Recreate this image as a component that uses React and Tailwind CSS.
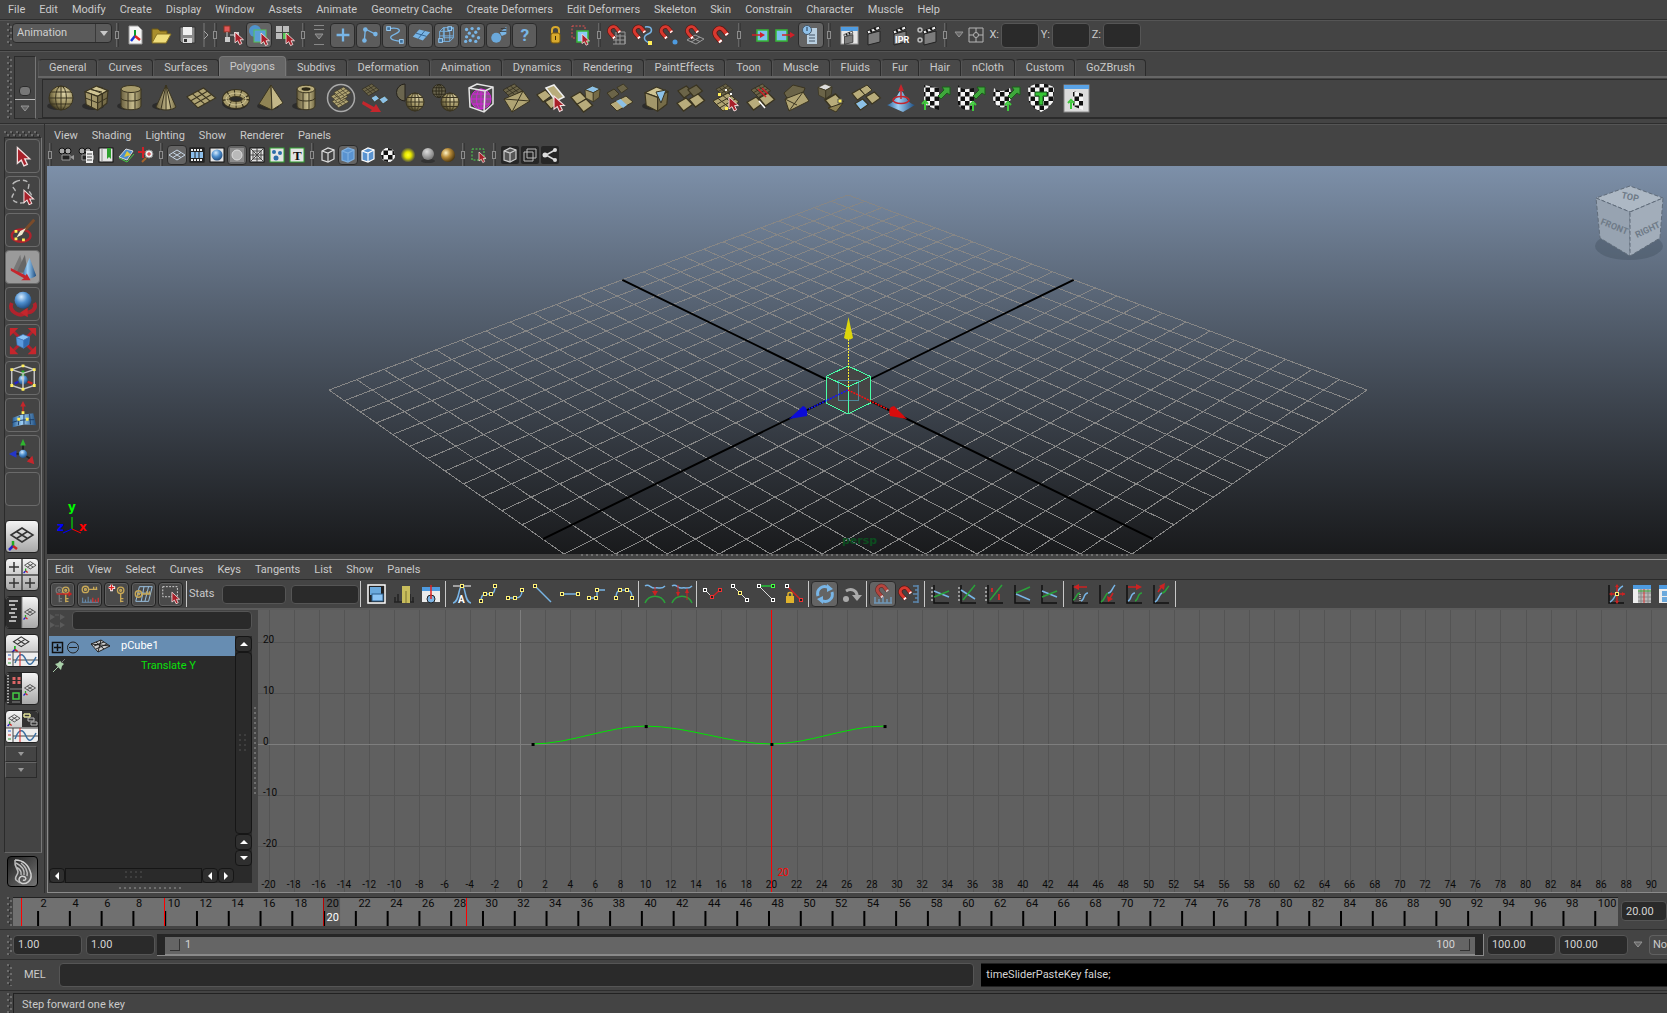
import { useState } from "react";

const MENUS = [
  "File", "Edit", "Modify", "Create", "Display", "Window", "Assets", "Animate",
  "Geometry Cache", "Create Deformers", "Edit Deformers", "Skeleton", "Skin",
  "Constrain", "Character", "Muscle", "Help",
];
const SHELF_TABS = [
  "General", "Curves", "Surfaces", "Polygons", "Subdivs", "Deformation",
  "Animation", "Dynamics", "Rendering", "PaintEffects", "Toon", "Muscle",
  "Fluids", "Fur", "Hair", "nCloth", "Custom", "GoZBrush",
];
const PANEL_MENUS = ["View", "Shading", "Lighting", "Show", "Renderer", "Panels"];
const GRAPH_MENUS = ["Edit", "View", "Select", "Curves", "Keys", "Tangents", "List", "Show", "Panels"];

/* ---------- shared svg pieces ---------- */

const Defs = () => (
  <svg className="absolute h-0 w-0" aria-hidden="true">
    <defs>
      <radialGradient id="tan" cx="0.65" cy="0.3" r="0.8">
        <stop offset="0" stopColor="#e0d6aa" />
        <stop offset="0.55" stopColor="#9c9060" />
        <stop offset="1" stopColor="#2f2a16" />
      </radialGradient>
      <linearGradient id="tanv" x1="0" y1="0" x2="1" y2="0">
        <stop offset="0" stopColor="#6b6140" />
        <stop offset="0.6" stopColor="#c6bb8c" />
        <stop offset="1" stopColor="#756b45" />
      </linearGradient>
      <radialGradient id="blue" cx="0.4" cy="0.3" r="0.8">
        <stop offset="0" stopColor="#d6ecff" />
        <stop offset="0.45" stopColor="#4e8fce" />
        <stop offset="1" stopColor="#143a6a" />
      </radialGradient>
      <linearGradient id="bluev" x1="0" y1="0" x2="1" y2="0">
        <stop offset="0" stopColor="#2b6299" />
        <stop offset="0.4" stopColor="#9fd0f5" />
        <stop offset="1" stopColor="#1c4c80" />
      </linearGradient>
      <radialGradient id="grey" cx="0.4" cy="0.3" r="0.8">
        <stop offset="0" stopColor="#dddddd" />
        <stop offset="1" stopColor="#6b6b6b" />
      </radialGradient>
      <radialGradient id="gold" cx="0.35" cy="0.35" r="0.8">
        <stop offset="0" stopColor="#fff3c4" />
        <stop offset="0.4" stopColor="#b98d3a" />
        <stop offset="1" stopColor="#2c1d04" />
      </radialGradient>
      <radialGradient id="glow">
        <stop offset="0" stopColor="#ffff30" />
        <stop offset="0.4" stopColor="#e6e600" />
        <stop offset="1" stopColor="#e6e600" stopOpacity="0" />
      </radialGradient>
      <pattern id="dots" width="6" height="6" patternUnits="userSpaceOnUse">
        <rect width="2" height="2" fill="#6c6c6c" />
        <rect x="3" y="3" width="2" height="2" fill="#6c6c6c" />
        <rect x="2" y="1" width="1" height="2" fill="#2c2c2c" />
        <rect x="5" y="4" width="1" height="2" fill="#2c2c2c" />
      </pattern>
      <pattern id="row" width="5" height="5" patternUnits="userSpaceOnUse">
        <rect width="2" height="2" fill="#6e6e6e" />
      </pattern>
      <pattern id="check" width="9" height="9" patternUnits="userSpaceOnUse">
        <rect width="9" height="9" fill="#f4f4f4" />
        <rect width="4.500" height="4.500" fill="#111" />
        <rect x="4.500" y="4.500" width="4.500" height="4.500" fill="#111" />
      </pattern>
    </defs>
  </svg>
);

const Svg = ({ s = 24, px = s, children }) => (
  <svg width={px} height={px} viewBox={`0 0 ${s} ${s}`} className="shrink-0 overflow-visible" fill="none" aria-hidden="true">
    {children}
  </svg>
);

const Grip = ({ className }) => (
  <svg className={`shrink-0 ${className}`} aria-hidden="true">
    <rect width="100%" height="100%" fill="url(#dots)" />
  </svg>
);

const Cursor = ({ x, y, k = 1 }) => (
  <path
    transform={`translate(${x} ${y}) scale(${k})`}
    d="M0 0V12L3 9.6L5 14L7.6 12.8L5.6 8.6H9.4Z"
    fill="#a8202a"
    stroke="#f3dede"
    strokeWidth="1"
  />
);

const Mesh = ({ x, y, k = 1, dim }) => (
  <g transform={`translate(${x} ${y}) scale(${k})`} stroke={dim ? "#2e2a1b" : "#3a3420"} strokeWidth="1">
    <path d="M0 8L15 0L26 9L10 18Z" fill={dim ? "#6b6448" : "#b0a473"} />
    <path d="M5 5.3L16 14.5M10 2.7L21 12M3.5 11.5L18.5 3M6.8 14.8L22.3 6" />
  </g>
);

const Quad = ({ x, y, dim, k = 1, fill }) => (
  <path
    transform={`translate(${x} ${y}) scale(${k})`}
    d="M0 4L7 0L12 5L5 10Z"
    fill={fill || (dim ? "#6b6448" : "#b8ac7b")}
    stroke="#3a3420"
  />
);

const Ball = ({ cx, cy, r, fill = "url(#tan)", line = "#3a3420" }) => (
  <g stroke={line}>
    <circle cx={cx} cy={cy} r={r} fill={fill} />
    <ellipse cx={cx} cy={cy} rx={r * 0.45} ry={r} />
    <path d={`M${cx - r} ${cy}H${cx + r}M${cx - r * 0.85} ${cy - r * 0.5}H${cx + r * 0.85}M${cx - r * 0.85} ${cy + r * 0.5}H${cx + r * 0.85}M${cx} ${cy - r}V${cy + r}`} />
  </g>
);

const Box = ({ x, y, k = 1, a = "#cfc493", b = "#a3976a", c = "#766c48", line = "#3a3420" }) => (
  <g transform={`translate(${x} ${y}) scale(${k})`} stroke={line} strokeLinejoin="round">
    <path d="M0 5L10 0L20 4L11 9Z" fill={a} />
    <path d="M0 5L11 9V21L1 16Z" fill={b} />
    <path d="M11 9L20 4L19 15L11 21Z" fill={c} />
  </g>
);

const Shadow = () => <ellipse cx="12" cy="23" rx="11" ry="4" fill="#2b2b2b" />;

const GreenArrow = ({ x, y }) => (
  <path transform={`translate(${x} ${y})`} d="M0 10L6 4L4 1H12V9L9 7L3 13Z" fill="#3fa83c" stroke="#1d5c1c" />
);
const GreenT = ({ x, y }) => (
  <path transform={`translate(${x} ${y})`} d="M4 9V2M1 3L4 0L7 3" stroke="#3fc83c" strokeWidth="2" />
);

/* ---------- shelf icons, 30 x 30 ---------- */

const SHELF = [
  ["Sphere", <><Shadow /><Ball cx={15} cy={15} r={12} /></>],
  ["Cube", <><Shadow /><Box x={4} y={3} k={1.15} /><path d="M4.5 15L17 20L26 15M10 6L21 10.500V24M16 3.500L22 5M10.500 11V25M9.500 6.500L21 9M21.500 10V24" stroke="#3a3420" /></>],
  ["Cylinder", <><Shadow /><path d="M5 6V23C5 28 25 28 25 23V6Z" fill="url(#tanv)" stroke="#3a3420" /><ellipse cx="15" cy="6" rx="10" ry="3.500" fill="#a89c6c" stroke="#3a3420" /><path d="M5 15C5 19 25 19 25 15M12 10V26M19 10V26" stroke="#3a3420" /></>],
  ["Cone", <><Shadow /><path d="M15 2L5 24C9 28 21 28 25 24Z" fill="url(#tanv)" stroke="#3a3420" /><path d="M15 2L10 26M15 2L15 27M15 2L20 26" stroke="#3a3420" /></>],
  ["Plane", <Mesh x={1} y={5} k={1.1} />],
  ["Torus", <><ellipse cx="14" cy="20" rx="13" ry="7" fill="#2b2b2b" /><ellipse cx="15" cy="16" rx="10" ry="6" stroke="#3a3420" strokeWidth="8" /><ellipse cx="15" cy="16" rx="10" ry="6" stroke="#a89c6c" strokeWidth="6" /><ellipse cx="15" cy="16" rx="10" ry="6" stroke="#3a3420" strokeWidth="7" strokeDasharray="1 5" /><ellipse cx="15" cy="16" rx="10" ry="6" stroke="#cfc493" strokeWidth="1" /></>],
  ["Pyramid", <><Shadow /><path d="M15 2L3 21L16 27Z" fill="#8f8354" stroke="#3a3420" /><path d="M15 2L16 27L27 20Z" fill="#c3b788" stroke="#3a3420" /></>],
  ["Pipe", <><Shadow /><path d="M6 6V23C6 28 24 28 24 23V6Z" fill="url(#tanv)" stroke="#3a3420" /><ellipse cx="15" cy="6" rx="9" ry="3.800" fill="#b8ac7b" stroke="#3a3420" /><ellipse cx="15" cy="6" rx="4.500" ry="1.800" fill="#2b2717" /><path d="M6 15C6 19 24 19 24 15M12 10V26M18 10V26" stroke="#3a3420" /></>],
  ["Combine", <><circle cx="15" cy="15" r="13.500" stroke="#a9a9a9" strokeWidth="1.500" /><Mesh x={6} y={13} k={0.65} /><Mesh x={5} y={8} k={0.65} /><Mesh x={8} y={4} k={0.65} /></>],
  ["Separate", <><Mesh x={1} y={1} k={0.65} dim /><Quad x={10} y={12} k={0.7} fill="#8dc1e6" /><Quad x={18} y={13} k={0.8} fill="#8dc1e6" /><path d="M2 18L13 24L15 21L20 29L9 29L11 27L1 21Z" fill="#c5262c" /></>],
  ["Extract", <><path d="M9 1A8 8 0 0 0 9 18Z" fill="#6b664f" stroke="#24211a" /><Ball cx={19} cy={19} r={9} /></>],
  ["Booleans", <><Ball cx={8} cy={8} r={6.5} fill="#6b664f" line="#2e2a1b" /><Ball cx={19} cy={19} r={9} /></>],
  ["Smooth Proxy", <><Ball cx={15} cy={16} r={10} fill="#8a4f8c" line="#d323d8" /><path d="M3 5L11 1L27 4V21L18 29L4 24ZM3 5L19 8L27 4M19 8L18 29" stroke="#e4e4e4" strokeWidth="1.500" /></>],
  ["Reduce", <><Mesh x={2} y={1} k={0.75} dim /><path d="M3 16L22 8L29 18L11 29Z" fill="#b0a473" stroke="#3a3420" /><path d="M3 16L29 18M22 8L11 29" stroke="#3a3420" /></>],
  ["Split Polygon", <><Quad x={1} y={7} k={1.2} /><Quad x={9} y={14} k={1.2} /><path d="M10 5L18 2L28 14L20 18Z" fill="#b8ac7b" stroke="#eee" strokeWidth="1.500" /><Cursor x={18} y={13} k={1.1} /></>],
  ["Extrude", <><Quad x={0} y={9} k={1.3} /><Quad x={6} y={16} k={1.3} /><Box x={14} y={3} k={0.75} a="#8dc1e6" /></>],
  ["Bridge", <><Quad x={1} y={6} dim /><Quad x={11} y={1} dim k={0.9} /><path d="M4 21L20 13L27 19L11 28Z" fill="#b8ac7b" stroke="#3a3420" /><path d="M10 18L14.500 16L21 22L17 25Z" fill="#8dc1e6" /></>],
  ["Bevel", <><Shadow /><Box x={4} y={4} k={1.15} /><path d="M15 9L25 7L20 20Z" fill="#8dc1e6" stroke="#3a3420" /></>],
  ["Merge", <><Quad x={2} y={3} k={1.2} dim /><Quad x={12} y={2} dim k={1.2} /><Quad x={1} y={15} k={1.3} /><Quad x={13} y={11} k={1.3} /></>],
  ["Merge Vertex", <><Mesh x={5} y={1} k={0.65} dim /><Mesh x={2} y={10} /><path d="M7 10H10V13H7ZM14 24H17V27H14Z" fill="#ffee58" /><path d="M14 6H16V8H14ZM19 10H21V12H19Z" fill="#fff" /><Cursor x={18} y={14} /></>],
  ["Cut Faces", <><Mesh x={5} y={1} k={0.75} dim /><Quad x={1} y={14} k={1.3} /><Quad x={13} y={10} k={1.3} /><path d="M12 6L20 14M16 5L22 11" stroke="#d02028" strokeWidth="1.500" /><path d="M13 18L19 25" stroke="#fff" strokeWidth="1.500" /></>],
  ["Triangulate", <><path d="M3 10L12 2L24 5L21 13L6 15Z" fill="#6b6448" stroke="#3a3420" /><path d="M4 16L22 9L28 18L8 28Z" fill="#b0a473" stroke="#3a3420" /><path d="M22 9L8 28M4 16L16 22" stroke="#3a3420" /></>],
  ["Chamfer", <><Box x={2} y={1} k={0.7} a="#ddd" b="#6b6448" c="#5b563f" /><Quad x={9} y={11} k={1.5} /><path d="M12 25L20 29L27 20Z" fill="#8f8354" stroke="#3a3420" /><path d="M22 16H26V20H22Z" fill="#ffee58" stroke="#555" /></>],
  ["Poke", <><Quad x={1} y={6} k={1.1} /><Quad x={15} y={9} k={1.2} /><Quad x={9} y={2} /><Quad x={4} y={16} k={1.1} fill="#8dc1e6" /></>],
  ["Sculpt", <><path d="M1 22C10 20 12 8 15 8S20 20 29 22L17 29Z" fill="url(#bluev)" /><ellipse cx="15" cy="17" rx="8" ry="3.500" stroke="#c5262c" strokeWidth="1.500" /><path d="M15 16V6" stroke="#c5262c" strokeWidth="1.500" /><path d="M12 8L15 1L18 8Z" fill="#c5262c" /></>],
  ["Planar Mapping", <><path d="M3 2L18 5V27L3 22Z" fill="url(#check)" /><GreenArrow x={17} y={3} /><GreenT x={0} y={18} /></>],
  ["Cylindrical Mapping", <><path d="M2 2C6 8 12 6 18 5V25C12 29 4 26 2 21Z" fill="url(#check)" /><GreenArrow x={17} y={3} /><GreenT x={13} y={19} /></>],
  ["Spherical Mapping", <><path d="M3 5C6 9 14 9 19 5C21 12 20 20 16 23C10 27 3 22 2 16Z" fill="url(#check)" /><GreenArrow x={17} y={3} /><GreenT x={13} y={19} /></>],
  ["Automatic Mapping", <><path d="M2 4L10 1H20L28 4L27 19L22 25L15 29L8 25L3 19Z" fill="url(#check)" /><path d="M9 9H21V13H17V22H13V13H9Z" fill="#35c435" stroke="#14501a" /></>],
  ["UV Texture Editor", <><rect x="3" y="2" width="25" height="27" fill="#dcdcdc" stroke="#888" /><rect x="3" y="2" width="25" height="4" fill="#5aa3e6" /><path d="M12 8L22 11V27L12 23Z" fill="url(#check)" /><GreenT x={6} y={17} /></>],
];

/* ---------- status line icons, 24 x 24 ---------- */

const Clap = ({ x = 0 }) => (
  <g transform={`translate(${x} 0)`}>
    <path d="M5 11L17 8V19L5 22Z" fill="#7c7c7c" stroke="#222" />
    <path d="M4 8L16 3L17 6L5 11Z" fill="#eee" stroke="#222" />
    <path d="M7 7L9 9M11 5L13 7" stroke="#111" strokeWidth="2" />
  </g>
);

const Magnet = ({ x = 0, y = 0, k = 1 }) => (
  <g transform={`translate(${x} ${y}) scale(${k})`} strokeWidth="4">
    <path d="M10 19L4 12C0 6 9 0 13 6L17 11" stroke="#5c1410" strokeWidth="5.500" />
    <path d="M10 19L4 12C0 6 9 0 13 6L17 11" stroke="#d8392f" />
    <path d="M8.500 17.200L10 19M15.800 9.400L17 11" stroke="#fff" />
  </g>
);

const Dot = ({ x, y, c = "#9fd4ff" }) => <rect x={x} y={y} width="4" height="4" fill="#3f6f99" stroke={c} />;

const FILES = [
  ["New Scene", <><path d="M6 3H15L19 7V21H6Z" fill="#f5f5f5" stroke="#999" /><path d="M12 13V7" stroke="#0a9b2a" strokeWidth="2" /><path d="M12 13L8 18" stroke="#1535d8" strokeWidth="2.500" /><path d="M12 13L17 17" stroke="#e02020" strokeWidth="2.500" /></>],
  ["Open Scene", <><path d="M3 19V6H9L11 8H18V11" fill="#a98e2c" stroke="#6b5716" /><path d="M3 20L8 11H22L17 20Z" fill="#f0de7c" stroke="#8a7423" /></>],
  ["Save Scene", <><path d="M5 4H20V20H7L5 18Z" fill="#8b8b8b" stroke="#333" /><rect x="8" y="4" width="9" height="8" fill="#f1f1f1" /><rect x="8" y="15" width="9" height="5" fill="#ddd" /><rect x="9" y="16" width="3" height="3" fill="#333" /></>],
];

const SELECT_MODES = [
  ["Select by hierarchy", <><rect x="3" y="3" width="6" height="6" fill="#e05858" stroke="#832" /><rect x="4" y="14" width="5" height="5" fill="#ccc" /><rect x="13" y="9" width="5" height="5" fill="#ccc" /><path d="M6 9V14M9 12H13" stroke="#ccc" /><Cursor x={14} y={9} k={0.9} /></>],
  ["Select by object type", <><circle cx="8" cy="8" r="6" fill="#4f93cb" /><rect x="7" y="7" width="12" height="12" fill="#5b9fd6" stroke="#57c457" strokeWidth="1" /><Cursor x={14} y={10} k={0.9} /></>, true],
  ["Select by component type", <><rect x="3" y="3" width="6" height="6" fill="#bbb" /><rect x="10" y="3" width="6" height="6" fill="#bbb" /><rect x="3" y="10" width="6" height="6" fill="#bbb" /><rect x="10" y="10" width="6" height="6" fill="#57c457" /><Cursor x={13} y={10} k={0.9} /></>],
];

const MASKS = [
  ["Handles", <path d="M12 5V19M5 12H19" stroke="#78b5e6" strokeWidth="2.500" />],
  ["Joints", <><path d="M8 6L7 17M9 6L19 11" stroke="#78b5e6" strokeWidth="1.500" /><circle cx="8" cy="6" r="2.500" fill="#78b5e6" /><circle cx="7" cy="18" r="2.500" fill="#78b5e6" /><circle cx="19" cy="11" r="2.500" fill="#78b5e6" /></>],
  ["Curves", <><path d="M5 5C18 3 20 8 12 11S6 18 19 19" stroke="#78b5e6" strokeWidth="1.500" /><Dot x={3} y={3} /><Dot x={17} y={17} /></>],
  ["Surfaces", <><path d="M3 14L10 6L22 9L14 18Z" fill="#78b5e6" /><path d="M6.500 10L18 13.500M9 16L16 7.500" stroke="#2f5f8c" /></>],
  ["Deformers", <><path d="M4 8H15V19H4ZM8 4H19V15H8ZM4 8L8 4M15 8L19 4M15 19L19 15M9 4V19M4 13H19" stroke="#78b5e6" /><Dot x={13} y={3} /><Dot x={3} y={16} /></>],
  ["Dynamics", <g fill="#78b5e6">{[[5, 6], [11, 5], [18, 5], [8, 10], [15, 9], [5, 14], [12, 13], [18, 15], [9, 18], [15, 19], [4, 19]].map(([x, y]) => <circle key={`${x}-${y}`} cx={x} cy={y} r="1.800" />)}</g>],
  ["Rendering", <><circle cx="9" cy="15" r="5.500" fill="#6ba9dc" /><path d="M13 9L20 3V11L15 13Z" fill="#78b5e6" /><path d="M14 5H20M13 8H20" stroke="#333" /></>],
  ["Miscellaneous", <text x="7" y="19" fontSize="19" fontWeight="700" fill="#78b5e6">?</text>],
];

const LOCKS = [
  ["Lock selection", <><path d="M9 11V7C9 3 16 3 16 7V11" stroke="#d8a92c" strokeWidth="2" /><rect x="8" y="10" width="9" height="10" rx="2" fill="#d8a92c" stroke="#7b5a0c" /><rect x="12" y="13" width="1" height="4" fill="#3b2b05" /></>],
  ["Highlight selection", <><path d="M3 3H16V15H3Z" stroke="#e05050" strokeDasharray="2 1.500" /><rect x="8" y="8" width="11" height="11" fill="#8dc9f5" stroke="#37b837" strokeWidth="1.500" /><Cursor x={13} y={11} k={0.8} /></>],
];

const SNAPS = [
  ["Snap to grids", <><path d="M10 13H20V21H8M11 9V21M15 11V21M20 9V21M8 17H20M13 9H20" stroke="#9a9a9a" /><Magnet x={2} y={1} k={0.75} /></>],
  ["Snap to curves", <><Magnet x={1} y={1} k={0.75} /><path d="M14 4C22 3 22 9 17 11S12 18 19 20" stroke="#78b5e6" strokeWidth="1.500" /><rect x="17" y="18" width="4" height="4" fill="#ffee58" /></>],
  ["Snap to points", <><Magnet x={2} y={1} k={0.75} /><circle cx="18" cy="19" r="2.500" fill="#4e9be0" /></>],
  ["Snap to view planes", <><path d="M4 17L12 12L21 16L13 21ZM8 14.500L17 18.500M8 19L17 14" stroke="#9a9a9a" /><Magnet x={2} y={1} k={0.75} /></>],
  ["Make live", <Magnet x={3} y={2} k={0.9} />],
];

const HISTORY = [
  ["Inputs to selected", <><rect x="10" y="7" width="11" height="11" fill="#7cc0ee" stroke="#37b837" strokeWidth="1.500" /><path d="M5 12H13" stroke="#d02028" strokeWidth="1.500" /><path d="M13 9L18 12L13 15Z" fill="#d02028" /></>],
  ["Outputs of selected", <><rect x="3" y="7" width="11" height="11" fill="#7cc0ee" stroke="#37b837" strokeWidth="1.500" /><path d="M9 12H18" stroke="#d02028" strokeWidth="1.500" /><path d="M17 9L22 12L17 15Z" fill="#d02028" /></>],
  ["Construction history", <><path d="M8 5H18V21H8Z" fill="#b9cfe0" /><circle cx="8" cy="7" r="4.500" fill="#8fc1ea" stroke="#456" /><path d="M8 4V8" stroke="#234" /><path d="M10 12H16M10 15H16M10 18H16" stroke="#456" /></>, true],
];

const RENDERS = [
  ["Render view", <><rect x="4" y="4" width="17" height="17" fill="#e6e6e6" stroke="#999" /><rect x="4" y="4" width="17" height="4" fill="#4e9be0" /><g transform="translate(4 6) scale(0.700)"><Clap /></g></>],
  ["Render current frame", <Clap />],
  ["IPR render", <><Clap /><text x="6" y="20" fontSize="9" fontWeight="700" fill="#fff">IPR</text></>],
  ["Render settings", <><circle cx="5" cy="7" r="2" stroke="#bbb" strokeWidth="1.500" /><circle cx="5" cy="17" r="2" stroke="#bbb" strokeWidth="1.500" /><Clap x={4} /></>],
];

/* ---------- viewport panel icons, 18 x 18 ---------- */

const Cam = () => (
  <>
    <circle cx="5" cy="5" r="3" fill="#aaa" stroke="#111" />
    <circle cx="11" cy="5" r="3" fill="#aaa" stroke="#111" />
    <path d="M5 9H13V14H5Z" fill="#222" stroke="#999" />
    <path d="M13 11L17 9V14Z" fill="#999" />
  </>
);
const WireBox = ({ a = "none", b = "none", line = "#ddd" }) => (
  <g stroke={line} strokeWidth="1.200">
    <path d="M3 5L9 2L15 4V13L9 16L3 14Z" fill={a} />
    <path d="M3 5L9 7L15 4M9 7V16" fill={b} />
  </g>
);
const Card = ({ children, line = "#111" }) => (
  <>
    <rect x="2" y="2" width="14" height="14" fill="#e4e4e4" stroke={line} />
    {children}
  </>
);

const PANEL_ICONS = [
  [
    ["Select camera", <Cam />],
    ["Camera attributes", <><Cam /><path d="M9 5H16V17H9Z" fill="#eee" /><path d="M10 8H15M10 11H15M10 14H15" stroke="#444" /></>],
    ["Bookmarks", <Card><path d="M10 2H14V13L12 11L10 13Z" fill="#2fa02f" /><path d="M5 2V16" stroke="#888" /></Card>],
    ["Image plane", <><path d="M2 11L9 3L16 5L10 14Z" fill="#4c8fd0" stroke="#ddd" /><path d="M7 11L10 5L14 9Z" fill="#e0c93c" /><path d="M2 12L10 16L17 8" stroke="#4c4" /></>],
    ["2D pan zoom", <><path d="M6 1V12M1 6H12" stroke="#d02028" strokeWidth="2" /><circle cx="12" cy="8" r="4" fill="#eee" stroke="#888" /><path d="M12 6V10M10 8H14" stroke="#d02028" /><path d="M9 12L5 16" stroke="#a8642c" strokeWidth="2" /></>],
  ],
  [
    ["Grid", <path d="M1 9L9 4L17 9L9 14ZM5 6.500L13 11.500M5 11.500L13 6.500" stroke="#c6d5e4" />, true],
    ["Film gate", <Card><rect x="2" y="2" width="14" height="14" fill="#222" /><rect x="3" y="6" width="12" height="6" fill="#8dbfec" /><path d="M3 4H15M3 14H15" stroke="#eee" strokeWidth="2" strokeDasharray="2 1" /><path d="M7 6V12M11 6V12" stroke="#222" /></Card>],
    ["Resolution gate", <Card><circle cx="9" cy="9" r="5.500" fill="url(#blue)" /></Card>],
    ["Gate mask", <><rect x="2" y="2" width="14" height="14" fill="#8c8c8c" /><circle cx="9" cy="9" r="5" fill="#b9b9b9" stroke="#ddd" /></>, true],
    ["Field chart", <Card><path d="M2 2L16 16M16 2L2 16M9 2V16M2 9H16M5 5H13V13H5Z" stroke="#444" /></Card>],
    ["Safe action", <Card line="#2fa02f"><circle cx="6" cy="6" r="2" fill="#2c6ca8" /><circle cx="12" cy="7" r="2" fill="#2c6ca8" /><circle cx="8" cy="12" r="2.500" fill="#2c6ca8" /></Card>],
    ["Safe title", <Card line="#2fa02f"><text x="5" y="14" fontSize="13" fontWeight="700" fontFamily="Liberation Serif, serif" fill="#111">T</text></Card>],
  ],
  [
    ["Wireframe", <WireBox />],
    ["Smooth shade", <WireBox a="#5a93d0" line="#7fb0e0" />, true],
    ["Wireframe on shaded", <WireBox a="#5a93d0" line="#fff" />],
    ["Textured", <><circle cx="9" cy="9" r="7" fill="#f2f2f2" /><circle cx="9" cy="9" r="7" fill="url(#check)" /></>],
    ["Use all lights", <circle cx="9" cy="9" r="7.500" fill="url(#glow)" />],
    ["Shadows", <><ellipse cx="9" cy="15" rx="7" ry="2" fill="#333" /><circle cx="9" cy="8" r="6" fill="url(#grey)" /></>],
    ["High quality", <circle cx="9" cy="9" r="7" fill="url(#gold)" />],
  ],
  [["Isolate select", <><path d="M2 3H14V14H2Z" stroke="#4fd84f" strokeDasharray="2 1.500" /><Cursor x={9} y={6} k={0.75} /></>]],
  [
    ["X-ray", <><rect width="18" height="18" rx="2" fill="#262626" /><WireBox a="#555" line="#ccc" /></>],
    ["X-ray components", <><rect width="18" height="18" rx="2" fill="#262626" /><path d="M3 6H12V15H3ZM6 3H15V12H6Z" stroke="#bbb" /></>],
    ["X-ray joints", <><rect width="18" height="18" rx="2" fill="#262626" /><path d="M14 4L5 9L14 14" stroke="#ddd" strokeWidth="1.500" /><circle cx="14" cy="4" r="2" fill="#ddd" /><circle cx="4" cy="9" r="2.500" fill="#ddd" /><circle cx="14" cy="14" r="2" fill="#ddd" /></>],
  ],
];

/* ---------- tool box icons, 32 x 32 ---------- */

const TOOLS = [
  ["Select Tool", <Cursor x={10} y={7} k={1.4} />],
  ["Lasso Tool", <><path d="M8 4C14 1 24 2 22 9S28 16 24 22S8 28 5 23S10 15 7 12S4 6 8 4" stroke="#b8b8b8" strokeWidth="1.500" strokeDasharray="5 3" /><Cursor x={17} y={13} k={1.1} /></>],
  ["Paint Selection Tool", <><ellipse cx="14" cy="22" rx="10" ry="6.500" stroke="#b0222c" strokeWidth="2.500" /><path d="M28 5L18 16" stroke="#7a4b2a" strokeWidth="3" /><path d="M19 14L15 21L9 24L13 17Z" fill="#f0ead0" /><path d="M7 16H10V19H7ZM7 24H10V27H7ZM15 25H18V28H15Z" fill="#ffee58" /></>],
  ["Move Tool", <><path d="M13 3L5 20H17Z" fill="#777" /><path d="M18 3L9 22H21Z" fill="#666" /><path d="M23 6L15 25C18 29 27 29 30 25Z" fill="url(#bluev)" /><path d="M3 17L19 25L20 23L24 30H14L17 28L3 20Z" fill="#c5262c" /></>, true],
  ["Rotate Tool", <><path d="M4 15C0 24 12 30 18 26" stroke="#b0222c" strokeWidth="4" /><path d="M28 15C31 20 26 26 18 25" stroke="#b0222c" strokeWidth="4" /><path d="M21 20L13 25L21 30Z" fill="#c5262c" /><circle cx="16" cy="12" r="9" fill="url(#blue)" /></>],
  ["Scale Tool", <><path d="M5 5L27 27M27 5L5 27" stroke="#b0222c" strokeWidth="3" /><path d="M2 2H11L2 11ZM30 2V11L21 2ZM2 30V21L11 30ZM30 30H21L30 21Z" fill="#c5262c" /><Box x={9} y={9} k={0.7} a="#8cc4f4" b="#5a9ade" c="#2f6bb0" line="#3f7cc0" /></>],
  ["Universal Manipulator", <><circle cx="16" cy="18" r="5" fill="url(#blue)" /><path d="M16 14V8" stroke="#2a2" strokeWidth="3" /><path d="M21 20L26 22" stroke="#c22" strokeWidth="2.500" /><path d="M11 20L7 22" stroke="#22c" strokeWidth="2.500" /><path d="M4 7L16 3L28 7V24L16 28L4 24ZM4 7L16 11L28 7M16 11V28" stroke="#c9c9c9" strokeWidth="1.500" /><path d="M2.500 5.500H5.500V8.500H2.500ZM14.500 1.500H17.500V4.500H14.500ZM26.500 5.500H29.500V8.500H26.500ZM2.500 22.500H5.500V25.500H2.500ZM26.500 22.500H29.500V25.500H26.500ZM14.500 26.500H17.500V29.500H14.500Z" fill="#ffee58" /></>],
  ["Soft Modification Tool", <><path d="M5 19L13 16L27 14L30 27L17 26L5 29Z" fill="url(#bluev)" /><path d="M4 24C12 21 20 21 28 21M12 17L11 27M17 15V26M23 15L24 26" stroke="#1b3b62" /><path d="M16 14V5" stroke="#c22" strokeWidth="1.500" /><path d="M13 7L16 1L19 7Z" fill="#c5262c" /><path d="M14.500 12H17.500V15H14.500ZM10 19H13V22H10ZM19 19H22V22H19Z" fill="#ffee58" /></>],
  ["Show Manipulator Tool", <><path d="M16 16V7M16 18L8 18M17 19L25 24" stroke="#222" strokeWidth="2" /><circle cx="16" cy="18" r="4.500" fill="url(#blue)" /><path d="M13 9L16 2L19 9Z" fill="#2fb52f" /><path d="M9 14V22L1 18Z" fill="#2436c8" /><path d="M20 26L26 20L28 29Z" fill="#c5262c" /></>],
  ["Last tool", null],
];

const MiniGrid = ({ x = 0, y = 0, k = 1 }) => (
  <g transform={`translate(${x} ${y}) scale(${k})`}>
    <path d="M5 14L16 7L27 14L16 21ZM10.500 10.500L21.500 17.500M10.500 17.500L21.500 10.500" stroke="#333" strokeWidth="1.500" />
    <path d="M7 25V20" stroke="#2a2" strokeWidth="2.500" />
    <path d="M7 25L3 29" stroke="#22c" strokeWidth="2.500" />
    <path d="M7 25L11 28" stroke="#c22" strokeWidth="2.500" />
  </g>
);
const MiniCurve = () => (
  <>
    <rect y="17" width="32" height="15" fill="#eee" />
    <path d="M2 20H5" stroke="#36c" /><path d="M2 24H5" stroke="#c33" /><path d="M2 28H5" stroke="#393" />
    <path d="M7 17V32M7 25H32M0 17H32" stroke="#444" />
    <path d="M9 28C13 17 17 18 20 25S26 30 30 22" stroke="#3a6ea0" strokeWidth="1.500" />
    <path d="M14 17V32" stroke="#d22" />
  </>
);
const LAYOUTS = [
  ["Single Perspective View", <MiniGrid />],
  ["Four View", <><MiniGrid x={16} y={-1} k={0.52} /><path d="M16 0V32M0 16H32" stroke="#444" strokeWidth="1.500" /><path d="M8 3V13M3 8H13M8 19V29M3 24H13M24 19V29M19 24H29" stroke="#333" strokeWidth="1.500" /></>],
  ["Persp/Outliner", <><rect width="16" height="32" fill="#2c2c2c" /><path d="M3 4H12M3 8H9M5 12H11M3 16H9M5 20H11M3 24H10" stroke="#ddd" strokeWidth="1.500" /><MiniGrid x={16} y={8} k={0.5} /><path d="M16 0V32" stroke="#888" /></>],
  ["Persp/Graph", <><MiniGrid x={4} y={-3} k={0.7} /><MiniCurve /></>],
  ["Hypershade/Persp", <><rect width="16" height="32" fill="#2c2c2c" /><path d="M2 2V30" stroke="#aaa" strokeWidth="2" strokeDasharray="1.500 1.500" /><path d="M8 4V12M13 4V12" stroke="#d66" strokeWidth="3" strokeDasharray="3 1" /><rect x="7" y="20" width="6" height="6" stroke="#4c4" strokeWidth="1.500" /><path d="M4 16H16M6 29H14" stroke="#888" /><MiniGrid x={16} y={8} k={0.5} /></>],
  ["Persp/Graph/Hierarchy", <><rect x="16" width="16" height="16" fill="#333" /><MiniGrid k={0.52} /><path d="M18 3H24V6H18ZM22 7H28V10H22ZM25 11H31V14H25Z" stroke="#bbb" /><path d="M18 3H24V6H18Z" stroke="#ee8" /><MiniCurve /></>],
];

/* ---------- graph editor icons, 24 x 24 ---------- */

const Key = ({ x = 0, y = 0, c = "#c9a957" }) => (
  <g transform={`translate(${x} ${y})`} stroke={c} strokeWidth="1.500">
    <circle cx="5" cy="5" r="3.500" />
    <circle cx="5" cy="5" r="1" />
    <path d="M5 9V18M5 14H8M5 17H8" />
  </g>
);
const Knots = ({ pts, c = "#fff27a" }) =>
  pts.map(([x, y]) => <rect key={`${x}-${y}`} x={x - 1.5} y={y - 1.5} width="3" height="3" fill="#222" stroke={c} />);
const Axes = () => <path d="M5 3V21H20" stroke="#111" strokeWidth="1.500" />;
const Scale = () => <path d="M2 6H4M2 10H4M2 14H4M2 18H4" stroke="#eee" />;

const KEY_TOOLS = [
  ["Move Nearest Picked Key Tool", <><Key x={3} y={3} c="#777" /><Key x={10} y={3} /><path d="M5 12H18" stroke="#c22" strokeWidth="1.500" /><path d="M18 9L22 12L18 15Z" fill="#c22" /></>],
  ["Insert Keys Tool", <><g transform="translate(2 12) rotate(-90)"><Key /></g><path d="M3 21H21M4 21V16M7 21V18M10 21V15M13 21V18" stroke="#6b93b8" /><path d="M15 21V16M18 21V18M21 21V16" stroke="#c33" strokeWidth="1.500" /></>],
  ["Add Keys Tool", <><path d="M6 2V9M3 5H10" stroke="#fff" strokeWidth="3" /><path d="M6 2V8M3 5H9" stroke="#d22" strokeWidth="1.500" /><Key x={11} y={3} /></>],
  ["Lattice Deform Keys", <><path d="M7 4H21L17 20H3ZM12 4L9 20M17 4L13 20M5 11H19" stroke="#9fc8ea" /><g transform="translate(1 17) rotate(-90)"><Key /></g></>],
  ["Region Select Tool", <><path d="M3 4H19V15H3Z" stroke="#ddd" strokeDasharray="2 1.500" /><Cursor x={13} y={10} k={0.9} /></>],
];

const GRAPH_GROUPS = [
  [
    ["Frame all", <><rect x="3" y="3" width="17" height="18" fill="#222" stroke="#fff" strokeWidth="1.500" /><rect x="5" y="5" width="11" height="8" fill="#6ba9dc" /><rect x="7" y="12" width="11" height="7" fill="#8cc4f4" stroke="#2c5f8c" /></>],
    ["Frame playback range", <><path d="M2 20H22M3 20V15M6 20V12M18 20V12M21 20V15" stroke="#222" strokeWidth="1.500" /><rect x="10" y="4" width="8" height="17" fill="#c8bd5c" /><path d="M14 9V21" stroke="#7a7230" /></>],
    ["Center current time", <><rect x="3" y="5" width="18" height="15" fill="#ececec" /><rect x="3" y="5" width="18" height="4" fill="#4e9be0" /><circle cx="12" cy="17" r="4" fill="#7cb4e4" stroke="#222" /><path d="M12 3V17" stroke="#d22" strokeWidth="1.500" /></>],
  ],
  [
    ["Auto tangents", <><path d="M3 21C10 20 8 4 12 4S14 20 21 21" stroke="#78b5e6" strokeWidth="1.500" /><path d="M3 4H21" stroke="#fff" /><Knots pts={[[12, 4]]} /><text x="8" y="21" fontSize="10" fontWeight="700" fill="#fff">A</text></>],
    ["Spline tangents", <><path d="M4 20C4 13 6 12 11 12S18 11 18 4" stroke="#78b5e6" strokeWidth="1.500" /><Knots pts={[[4, 19], [8, 12], [14, 12], [18, 4]]} /></>],
    ["Clamped tangents", <><path d="M4 16H11C16 16 18 14 18 8" stroke="#78b5e6" strokeWidth="1.500" /><Knots pts={[[4, 16], [11, 16], [18, 8]]} /></>],
    ["Linear tangents", <><path d="M4 4L20 20" stroke="#78b5e6" strokeWidth="1.500" /><Knots pts={[[4, 4]]} /></>],
    ["Flat tangents", <><path d="M4 12H20" stroke="#78b5e6" strokeWidth="1.500" /><Knots pts={[[4, 12], [20, 12]]} /></>],
    ["Step tangents", <><path d="M4 16H12V8H20" stroke="#78b5e6" strokeWidth="1.500" /><Knots pts={[[4, 16], [11, 16], [12, 8]]} /></>],
    ["Plateau tangents", <><path d="M4 17C4 9 6 8 12 8S20 9 20 17" stroke="#78b5e6" strokeWidth="1.500" /><Knots pts={[[4, 16], [8, 8], [15, 8], [20, 16]]} /></>],
  ],
  [
    ["Buffer curve snapshot", <><path d="M2 4C6 1 8 7 12 6S18 8 22 4" stroke="#78b5e6" strokeWidth="1.500" /><path d="M2 21C6 12 18 12 22 21" stroke="#2aa23a" strokeWidth="1.500" /><path d="M12 5V10" stroke="#c22" /><path d="M9 9L12 14L15 9Z" fill="#c22" /></>],
    ["Swap buffer curves", <><path d="M2 4C6 1 8 7 12 6S18 8 22 4" stroke="#78b5e6" strokeWidth="1.500" /><path d="M2 21C6 12 18 12 22 21" stroke="#2aa23a" strokeWidth="1.500" /><path d="M8 3V11M17 10V18" stroke="#c22" /><path d="M6 10L8 15L10 10ZM15 11L17 6L19 11Z" fill="#c22" /></>],
  ],
  [
    ["Break tangents", <><path d="M4 8L11 15" stroke="#ddd" /><path d="M11 15L19 8" stroke="#c22" strokeWidth="1.500" /><Knots pts={[[4, 8]]} c="#fff" /><Knots pts={[[11, 15], [19, 8]]} c="#e33" /></>],
    ["Unify tangents", <><path d="M5 4L19 18" stroke="#ddd" /><Knots pts={[[5, 4], [19, 18]]} c="#fff" /><Knots pts={[[12, 11]]} /></>],
    ["Free tangent weight", <><path d="M4 4L18 18" stroke="#ddd" /><path d="M4 4H18" stroke="#2aa23a" strokeWidth="2" /><Knots pts={[[4, 4], [18, 18]]} c="#fff" /><Knots pts={[[18, 4]]} c="#4f4" /></>],
    ["Lock tangent weight", <><path d="M5 4L19 18" stroke="#c22" strokeWidth="1.500" /><Knots pts={[[5, 4]]} c="#fff" /><Knots pts={[[19, 18]]} c="#e33" /><rect x="4" y="14" width="8" height="7" fill="#e0b32c" /><path d="M6 14V12C6 10 10 10 10 12V14" stroke="#e0b32c" strokeWidth="1.500" /></>],
  ],
  [
    ["Auto load graph editor", <><path d="M5 14C3 7 10 2 16 6" stroke="#78b5e6" strokeWidth="3" /><path d="M19 10C21 17 14 22 8 18" stroke="#78b5e6" strokeWidth="3" /><path d="M14 2L20 7L14 10ZM10 14L4 17L10 22Z" fill="#78b5e6" /></>, true],
    ["Load selected", <><circle cx="6" cy="17" r="3" fill="#aaa" /><path d="M6 9C11 6 17 8 17 14" stroke="#aaa" strokeWidth="3" /><path d="M12 13H22L17 19Z" fill="#aaa" /></>],
  ],
  [
    ["Time snap", <><path d="M3 21H21M4 21V15M8 21V17M12 21V15M16 21V17M20 21V15" stroke="#6f96b6" strokeWidth="1.500" /><g opacity="0.700"><Magnet x={4} y={1} k={0.75} /></g></>, true],
    ["Value snap", <><path d="M20 3V21M15 4H20M17 8H20M15 12H20M17 16H20M15 20H20" stroke="#5c88b0" strokeWidth="1.500" /><Magnet y={3} k={0.75} /></>],
  ],
  [
    ["Absolute view", <><Axes /><Scale /><path d="M5 9L20 15" stroke="#78b5e6" strokeWidth="1.500" /><path d="M5 15L20 9" stroke="#2aa23a" strokeWidth="1.500" /></>],
    ["Stacked view", <><Axes /><Scale /><path d="M5 8L19 17" stroke="#78b5e6" strokeWidth="1.500" /><path d="M7 18L19 3" stroke="#2aa23a" strokeWidth="1.500" /></>],
    ["Normalized view", <><Axes /><Scale /><path d="M7 18L19 3" stroke="#2aa23a" strokeWidth="1.500" /><path d="M9 6V10M16 12V18" stroke="#e22" strokeWidth="1.500" /></>],
    ["Renormalize", <><Axes /><path d="M6 11L20 5" stroke="#2aa23a" strokeWidth="1.500" /><path d="M6 12L20 18" stroke="#78b5e6" strokeWidth="1.500" /></>],
    ["Denormalize", <><Axes /><path d="M5 9L20 15" stroke="#78b5e6" strokeWidth="1.500" /><path d="M5 15L20 9" stroke="#2aa23a" strokeWidth="1.500" /></>],
  ],
  [
    ["Pre-infinity cycle", <><Axes /><path d="M5 18C8 18 8 11 12 11" stroke="#2aa23a" strokeWidth="1.500" /><path d="M13 19C17 18 15 11 20 11" stroke="#78b5e6" strokeWidth="1.500" /><path d="M9 5H19" stroke="#c22" strokeWidth="1.500" /><path d="M11 2L5 5L11 8Z" fill="#c22" /><path d="M12 12V20" stroke="#eee" strokeDasharray="1 1" /></>],
    ["Pre-infinity cycle with offset", <><Axes /><path d="M6 20C10 18 10 12 13 11" stroke="#2aa23a" strokeWidth="1.500" /><path d="M13 11C17 11 17 6 20 3" stroke="#78b5e6" strokeWidth="1.500" /><path d="M18 11L15 16" stroke="#c22" strokeWidth="1.500" /><path d="M12 14L13 20L18 17Z" fill="#c22" /></>],
    ["Post-infinity cycle", <><Axes /><path d="M6 19C10 18 8 11 13 11" stroke="#78b5e6" strokeWidth="1.500" /><path d="M13 19C17 18 15 11 20 11" stroke="#2aa23a" strokeWidth="1.500" /><path d="M6 5H16" stroke="#c22" strokeWidth="1.500" /><path d="M14 2L20 5L14 8Z" fill="#c22" /></>],
    ["Post-infinity cycle with offset", <><Axes /><path d="M6 20C10 18 10 12 13 11" stroke="#78b5e6" strokeWidth="1.500" /><path d="M13 11C17 11 17 6 20 4" stroke="#2aa23a" strokeWidth="1.500" /><path d="M9 10L13 4" stroke="#c22" strokeWidth="1.500" /><path d="M10 4L16 1L15 8Z" fill="#c22" /></>],
  ],
];

const GRAPH_RIGHT = [
  ["Unify curve", <><Axes /><path d="M6 20C12 17 12 7 19 4" stroke="#78b5e6" strokeWidth="1.500" /><path d="M13 4V20M6 12H21" stroke="#c22" strokeWidth="1.500" /><path d="M11 5L13 2L15 5ZM11 19L13 22L15 19ZM18 10L21 12L18 14ZM8 10L5 12L8 14Z" fill="#c22" /><Knots pts={[[13, 12]]} /></>],
  ["Dope sheet", <><rect x="3" y="3" width="18" height="18" fill="#bbb" /><rect x="3" y="3" width="18" height="4" fill="#4e9be0" /><rect x="3" y="7" width="5" height="14" fill="#eee" /><path d="M8 11H21M8 15H21M8 19H21M11 7V21M18 7V21" stroke="#888" /><path d="M14 7V21" stroke="#d33" /><path d="M8 9H21" stroke="#3a3" /></>],
  ["Trax editor", <><rect x="3" y="3" width="18" height="18" fill="#ececec" /><rect x="3" y="3" width="18" height="4" fill="#4e9be0" /><rect x="6" y="9" width="10" height="5" fill="#6ba9dc" /><rect x="6" y="15" width="12" height="5" fill="#6ba9dc" /></>],
];

/* ---------- small controls ---------- */

const Sep = () => (
  <svg width="10" height="26" viewBox="0 0 10 26" className="shrink-0" fill="none" aria-hidden="true">
    <path d="M5 1V25" stroke="#868686" />
    <path d="M6 1V25" stroke="#2b2b2b" />
    <rect x="3.500" y="9.500" width="3" height="7" fill="#444" stroke="#8c8c8c" />
  </svg>
);

const IconButton = ({ label, active, className = "h-[26px] w-[26px]", children }) => (
  <button
    aria-label={label}
    title={label}
    className={`flex shrink-0 items-center justify-center rounded-sm hover:bg-[#555] ${className} ${
      active ? "border border-[#2b2b2b] bg-[#646464]" : ""
    }`}
  >
    {children}
  </button>
);

const Row = ({ items }) =>
  items.map(([label, art, active]) => (
    <IconButton key={label} label={label} active={active}>
      <Svg>{art}</Svg>
    </IconButton>
  ));

const MenuRow = ({ items, label, className }) => (
  <nav aria-label={label} className={`flex items-center gap-[14px] ${className}`}>
    {items.map((m) => (
      <button key={m} className="shrink-0 whitespace-nowrap hover:text-white">{m}</button>
    ))}
  </nav>
);

const field = "min-w-0 rounded-sm border border-[#555] bg-[#2a2a2a] text-[#d4d4d4] outline-none";

const Chevron = () => (
  <svg width="10" height="8" viewBox="0 0 10 8" fill="none" aria-hidden="true">
    <path d="M1 1H9L5 6Z" fill="#666" stroke="#959595" />
  </svg>
);

/* ---------- sections ---------- */

function StatusLine() {
  return (
    <div className="flex h-[31px] items-center border-b border-[#2e2e2e] pl-[7px] shadow-[0_1px_0_#555]">
      <Grip className="h-[24px] w-[5px]" />
      <div className="relative mb-1 h-[20px] w-[100px] shrink-0 rounded-sm border border-[#2b2b2b] bg-[#5a5a5a]">
        <select aria-label="Menu set" className="h-full w-full appearance-none bg-transparent px-1 text-[#cfcfcf] outline-none">
          <option>Animation</option>
          <option>Polygons</option>
          <option>Rendering</option>
        </select>
        <span className="pointer-events-none absolute inset-y-0 right-0 flex w-[16px] items-center justify-center border-l border-[#3a3a3a]">
          <svg width="8" height="5" aria-hidden="true"><path d="M0 0H8L4 5Z" fill="#c8c8c8" /></svg>
        </span>
      </div>
      <Sep />
      <Row items={FILES} />
      <svg width="10" height="26" className="shrink-0" fill="none" aria-hidden="true">
        <path d="M4 1V25" stroke="#7a7a7a" />
        <path d="M4 9L8 13L4 17" stroke="#a5a5a5" />
      </svg>
      <Sep />
      <Row items={SELECT_MODES} />
      <Sep />
      <button aria-label="Selection masks" className="flex h-[26px] w-[22px] shrink-0 flex-col items-center justify-center gap-[3px]">
        <span className="h-px w-[10px] bg-[#888]" />
        <span className="h-px w-[10px] bg-[#888]" />
        <Chevron />
        <span className="h-px w-[10px] bg-[#888]" />
      </button>
      {MASKS.map(([label, art]) => (
        <IconButton key={label} label={label} className="mr-px h-[25px] w-[25px] border border-[#2b2b2b] bg-[#5c5c5c]">
          <Svg s={24} px={22}>{art}</Svg>
        </IconButton>
      ))}
      <div className="ml-1 flex"><Row items={LOCKS} /></div>
      <Sep />
      <Row items={SNAPS} />
      <Sep />
      <div className="ml-[2px] flex"><Row items={HISTORY} /></div>
      <Sep />
      <div className="ml-[2px] flex"><Row items={RENDERS} /></div>
      <Sep />
      <button aria-label="Input options" className="flex h-[26px] items-center gap-1 pr-1 pl-1">
        <Chevron />
        <svg width="16" height="16" fill="none" aria-hidden="true">
          <path d="M1 1H15V15H1ZM8 1V15M1 8H15" stroke="#b5b5b5" />
          <circle cx="8" cy="8" r="2.500" fill="#444" stroke="#b5b5b5" />
        </svg>
      </button>
      {["X", "Y", "Z"].map((axis) => (
        <label key={axis} className="flex items-center">
          <span className="w-[11px] text-right">{axis}:</span>
          <input className={`${field} ml-[2px] h-[25px] w-[38px]`} />
        </label>
      ))}
    </div>
  );
}

function Shelf() {
  const [tab, setTab] = useState("Polygons");

  return (
    <div className="flex h-[73px] items-stretch border-b border-[#2e2e2e] pt-[5px] pb-[4px] pl-[7px] shadow-[0_1px_0_#555]">
      <Grip className="w-[5px]" />
      <div className="ml-[2px] flex w-[22px] shrink-0 flex-col items-center justify-end border border-[#2b2b2b] border-r-[#777] pb-[5px]">
        <button aria-label="Shelf tabs" className="h-[10px] w-[12px] rounded-sm border border-[#2b2b2b] bg-[#777]" />
        <span className="mt-[3px] mb-[5px] h-px w-full bg-[#bbb]" />
        <button aria-label="Shelf menu"><Chevron /></button>
      </div>
      <div className="ml-[2px] flex min-w-0 flex-1 flex-col">
        <div role="tablist" className="flex h-[20px] items-end">
          {SHELF_TABS.map((t) => (
            <button
              key={t}
              role="tab"
              aria-selected={t === tab}
              onClick={() => setTab(t)}
              className={`shrink-0 rounded-t-sm border border-b-0 px-[10px] whitespace-nowrap ${
                t === tab
                  ? "h-[20px] border-[#777] bg-[#666]"
                  : "h-[17px] border-[#2b2b2b] border-l-[#555] border-t-[#2b2b2b] bg-[#494949]"
              }`}
            >
              {t}
            </button>
          ))}
        </div>
        <div className="flex flex-1 items-center border-t-2 border-b border-[#666] border-b-[#2b2b2b] pl-[4px]">
          <div className="flex h-[39px] flex-1 items-center border border-r-0 border-[#2b2b2b]">
            {SHELF.map(([label, art]) => (
              <IconButton key={label} label={label} className="h-[35px] w-[35px]">
                <Svg s={30}>{art}</Svg>
              </IconButton>
            ))}
          </div>
        </div>
      </div>
    </div>
  );
}

function ToolBox() {
  return (
    <aside className="flex w-[45px] shrink-0 flex-col border-r border-[#2e2e2e] pt-[7px] pl-1">
      <Grip className="h-[6px] w-[36px]" />
      <div className="flex w-[38px] flex-1 flex-col border border-[#2b2b2b] border-r-[#777] border-b-[#666]">
        {TOOLS.map(([label, art, active]) => (
          <button
            key={label}
            aria-label={label}
            title={label}
            className={`mt-px mb-[2px] flex h-[34px] w-[35px] items-center justify-center rounded-sm border border-[#6a6a6a] ${
              active ? "bg-[#9a9a9a]" : "bg-[#444] hover:bg-[#555]"
            }`}
          >
            <Svg s={32} px={30}>{art}</Svg>
          </button>
        ))}
        <div className="mt-[12px] flex flex-col gap-[5px]">
          {LAYOUTS.map(([label, art]) => (
            <button
              key={label}
              aria-label={label}
              title={label}
              className="flex h-[33px] w-[34px] items-center justify-center overflow-hidden rounded-sm border border-[#222] bg-linear-to-b from-[#f4f4f4] to-[#a8a8a8]"
            >
              <Svg s={32} px={32}>{art}</Svg>
            </button>
          ))}
        </div>
        <button aria-label="Panel layout" className="mt-[3px] flex h-[16px] w-[32px] items-center justify-center border border-[#666] border-r-[#2b2b2b] border-b-[#2b2b2b]">
          <svg width="6" height="5" aria-hidden="true"><path d="M0 0H6L3 4Z" fill="#999" /></svg>
        </button>
        <button aria-label="More layouts" className="flex h-[16px] w-[32px] items-center justify-center border border-[#666] border-r-[#2b2b2b] border-b-[#2b2b2b]">
          <svg width="6" height="5" aria-hidden="true"><path d="M0 0H6L3 4Z" fill="#999" /></svg>
        </button>
      </div>
      <button aria-label="Toggle script page" className="my-[3px] ml-[3px] mb-[6px] flex h-[31px] w-[31px] items-center justify-center rounded-sm border border-black bg-linear-to-br from-[#222] to-[#777]">
        <Svg s={28}>
          <path d="M6 2C15 2 20 8 22 16C23 23 17 27 12 25C8 22 11 16 16 19C18 21 16 23 14 22" stroke="#d0d0d0" strokeWidth="1.500" />
          <path d="M6 2C5 9 9 11 9 14C9 17 5 19 7 22L11 25M7 5C13 8 16 12 15 17M7 9C11 11 13 13 12 17M12 5C17 9 19 13 18 18" stroke="#bdbdbd" strokeWidth="1.500" />
        </Svg>
      </button>
    </aside>
  );
}

/* perspective projection of the ground grid, units run from -12 to 12 */
const project = (x, z) => {
  const u = (x + z) / 24;
  const v = (x - z) / 24;
  const w = 1 + 0.3 * v;
  return [801 + (519 * u) / w, 224 - (253.5 * v) / w];
};
const gridLine = (a, b) => {
  const [x1, y1] = project(...a);
  const [x2, y2] = project(...b);
  return `M${x1.toFixed(1)} ${y1.toFixed(1)}L${x2.toFixed(1)} ${y2.toFixed(1)}`;
};
const STEPS = Array.from({ length: 25 }, (_, i) => i - 12).filter((i) => i !== 0);
const GRID_PATH = STEPS.map((i) => gridLine([i, -12], [i, 12]) + gridLine([-12, i], [12, i])).join("");
const AXIS_PATH = gridLine([0, -12], [0, 12]) + gridLine([-12, 0], [12, 0]);

function Viewport() {
  return (
    <section aria-label="Perspective view" className="flex flex-col">
      <MenuRow items={PANEL_MENUS} label="Panel menu" className="h-[19px] pt-[5px] pl-[9px]" />
      <div className="flex h-[23px] items-center">
        {PANEL_ICONS.map((group, i) => (
          <div key={i} className="flex items-center">
            <Sep />
            <div className="flex items-center pl-px">
              {group.map(([label, art, active]) => (
                <IconButton key={label} label={label} active={active} className="h-[20px] w-[20px]">
                  <Svg s={18}>{art}</Svg>
                </IconButton>
              ))}
            </div>
          </div>
        ))}
      </div>
      <div className="relative ml-[2px] h-[388px] overflow-hidden bg-linear-to-b from-[#7d90a9] to-[#191a1c]">
        <svg viewBox="0 0 1620 388" preserveAspectRatio="xMidYMid slice" className="block h-full w-full" fill="none" aria-label="Ground grid">
          <path d={GRID_PATH} stroke="#868686" shapeRendering="crispEdges" />
          <path d={AXIS_PATH} stroke="#000" strokeWidth="2" />
          <path d="M801 200L779 210.500V237L801 248L823.500 237V210.500Z" fill="#454545" />
          <path d="M801 200L779 210.500V237L801 248L823.500 237V210.500ZM779 210.500L801 221L823.500 210.500M801 221V248" stroke="#48ffa6" shapeRendering="crispEdges" />
          <path d="M791.500 214.500H811.500V234.500H791.500Z" stroke="#5cd0ee" strokeDasharray="1 1" />
          <path d="M801.500 173V224" stroke="#ffee30" strokeDasharray="2 1" />
          <path d="M801 224L762 243" stroke="#1414ff" strokeWidth="1.500" strokeDasharray="2 1" />
          <path d="M801 224L840 243" stroke="#ff1010" strokeWidth="1.500" strokeDasharray="2 1" />
          <path d="M801.500 151L797 172Q801.500 175 806 172Z" fill="#dcd60c" />
          <path d="M742 253L756 240Q761 241 760 250Z" fill="#0c0cd8" />
          <path d="M860 253L843 250Q840 241 847 240Z" fill="#d80c0c" />
        </svg>
        <span className="absolute bottom-[6px] left-1/2 -ml-[15px] font-[DejaVu_Sans,sans-serif] font-bold text-[#0c4c1f]">persp</span>
        <svg width="40" height="40" className="absolute bottom-[15px] left-[8px]" fill="none" aria-hidden="true">
          <path d="M17 30V18" stroke="#0f0" />
          <path d="M17 30L8 34" stroke="#00f" />
          <path d="M17 30L26 34" stroke="#f00" />
          <g fontFamily="DejaVu Sans, sans-serif" fontSize="12" fontWeight="700">
            <text x="13" y="12" fill="#0f0">y</text>
            <text x="2" y="32" fill="#00f">z</text>
            <text x="24" y="32" fill="#f00">x</text>
          </g>
        </svg>
        <svg width="74" height="82" className="absolute top-[16px] right-0" fill="none" aria-label="View cube">
          <ellipse cx="36" cy="64" rx="34" ry="14" fill="#3c4a58" opacity="0.350" />
          <g stroke="#606c7a" strokeDasharray="4 2">
            <path d="M37 4L3 16L37 30L70 16Z" fill="#adb8c4" />
            <path d="M3 16L37 30V74L7 56Z" fill="#97a3b1" />
            <path d="M37 30L70 16L67 56L37 74Z" fill="#a2adba" />
          </g>
          <g fontSize="9" fontWeight="700" fill="#6f7b88">
            <text x="7" y="42" transform="rotate(22 7 42)">FRONT</text>
            <text x="44" y="56" transform="rotate(-25 44 56)">RIGHT</text>
            <text x="28" y="16" transform="rotate(12 28 16)">TOP</text>
          </g>
        </svg>
      </div>
      <div className="flex h-[5px] justify-center overflow-hidden">
        <svg width="550" height="3" aria-hidden="true"><rect width="100%" height="100%" fill="url(#row)" /></svg>
      </div>
    </section>
  );
}

const Bar = () => <span className="mx-px h-[26px] w-[2px] shrink-0 border-l border-[#c8c8c8]" />;

const scrollBtn = "flex shrink-0 items-center justify-center rounded-sm border border-[#161616] bg-[#2f2f2f]";
const Tri = ({ d }) => (
  <svg width="8" height="8" aria-hidden="true"><path d={d} fill="#fff" /></svg>
);

function Outliner() {
  return (
    <div className="flex w-[204px] shrink-0 flex-col pl-px">
      <div className="flex h-[26px] items-start gap-[5px] pt-px">
        <Svg s={18}>
          <path d="M1 3L6 6L1 9ZM1 11L6 14L1 17ZM11 3L16 6L11 9ZM11 11L16 14L11 17Z" fill="#5a5a5a" />
          <path d="M6 4H10M6 15H10" stroke="#5a5a5a" />
        </Svg>
        <input aria-label="Filter curves" className={`${field} h-[19px] flex-1`} />
      </div>
      <div className="flex flex-1 bg-[#2a2a2a]">
        <ul className="min-w-0 flex-1">
          <li className="flex h-[20px] items-center bg-[#678db2] text-white">
            <svg width="72" height="18" fill="none" aria-hidden="true">
              <path d="M3.500 5.500H13.500V15.500H3.500ZM8.500 7V14M5 10.500H12" stroke="#111" strokeWidth="1.500" />
              <circle cx="24" cy="10.500" r="5.500" stroke="#222" /><path d="M20 10.500H28" stroke="#222" />
              <path d="M42 7L52 3L61 9L49 15Z" fill="#ccc" stroke="#222" />
              <path d="M45 9L55 5M47 12L58 7M47 5L55 12M52 3L49 15M42 7L61 9" stroke="#222" />
            </svg>
            pCube1
          </li>
          <li className="flex h-[20px] items-center text-[#0be00b]">
            <svg width="92" height="18" fill="none" aria-hidden="true">
              <path d="M4 15L9 10" stroke="#a9c9a9" /><path d="M6 7L12 13L13 9L15 7L11 4L9 6Z" fill="#a9d0a9" /><path d="M12 6L16 2" stroke="#777" />
            </svg>
            Translate Y
          </li>
        </ul>
        <div className="flex w-[17px] flex-col pb-[2px]">
          <button aria-label="Scroll up" className={`${scrollBtn} h-[16px]`}><Tri d="M0 6L4 2L8 6Z" /></button>
          <div className="flex flex-1 items-center justify-center rounded-sm border border-[#161616]">
            <svg width="10" height="18" aria-hidden="true"><rect width="100%" height="100%" fill="url(#row)" opacity="0.300" /></svg>
          </div>
          <button aria-label="Scroll one up" className={`${scrollBtn} h-[16px]`}><Tri d="M0 6L4 2L8 6Z" /></button>
          <button aria-label="Scroll down" className={`${scrollBtn} h-[16px]`}><Tri d="M0 2L4 6L8 2Z" /></button>
        </div>
      </div>
      <div className="flex h-[15px] bg-[#2a2a2a] pr-[18px]">
        <button aria-label="Scroll left" className={`${scrollBtn} w-[16px]`}><Tri d="M6 0L2 4L6 8Z" /></button>
        <div className="flex flex-1 items-center justify-center border border-[#161616]">
          <svg width="18" height="10" aria-hidden="true"><rect width="100%" height="100%" fill="url(#row)" opacity="0.300" /></svg>
        </div>
        <button aria-label="Scroll one left" className={`${scrollBtn} w-[16px]`}><Tri d="M6 0L2 4L6 8Z" /></button>
        <button aria-label="Scroll right" className={`${scrollBtn} w-[16px]`}><Tri d="M2 0L6 4L2 8Z" /></button>
      </div>
      <div className="flex h-[9px] items-center justify-center">
        <svg width="64" height="2" aria-hidden="true"><rect width="100%" height="100%" fill="url(#row)" /></svg>
      </div>
    </div>
  );
}

const gx = (frame) => 262 + frame * 12.57;
const gy = (value) => 134 - value * 5.12;
const FRAMES = Array.from({ length: 56 }, (_, i) => i * 2 - 20);
const KEYS = [[1, 0], [10, 3.5], [20, 0], [29, 3.5]];

function Curves() {
  const curve = KEYS.slice(1)
    .map(([f, v], i) => {
      const [pf, pv] = KEYS[i];
      const t = (f - pf) / 3;
      return `C${gx(pf + t)} ${gy(pv)} ${gx(f - t)} ${gy(v)} ${gx(f)} ${gy(v)}`;
    })
    .join("");

  return (
    <div className="relative min-w-0 flex-1 overflow-hidden bg-[#606060]">
      <svg className="absolute inset-0 h-full w-full" fill="none" aria-label="Animation curves">
        <g shapeRendering="crispEdges">
          {FRAMES.map((f) => (
            <rect key={f} x={Math.round(gx(f))} width="1" height="100%" fill={f === 0 ? "#7e7e7e" : "#545454"} />
          ))}
          {[20, 10, 0, -10, -20].map((v) => (
            <rect key={v} y={Math.round(gy(v))} width="100%" height="1" fill={v === 0 ? "#7e7e7e" : "#545454"} />
          ))}
        </g>
        <path d={`M${gx(1)} ${gy(0)}${curve}`} stroke="#00e600" strokeWidth="1" />
        <rect x={Math.round(gx(20))} width="1" height="100%" fill="#f00" shapeRendering="crispEdges" />
        {KEYS.map(([f, v]) => (
          <rect key={f} x={gx(f) - 1} y={gy(v) - 1} width="3" height="3" fill="#000" />
        ))}
        <g fill="#0a0a0a" fontSize="10">
          {[20, 10, 0, -10, -20].map((v) => (
            <text key={v} x="5" y={gy(v) + 1}>{v}</text>
          ))}
          {FRAMES.map((f) => (
            <text key={f} x={gx(f)} y="278" textAnchor="middle">{f}</text>
          ))}
          <text x={gx(20) + 6} y="266" fill="#f00">20</text>
        </g>
      </svg>
    </div>
  );
}

function GraphEditor() {
  return (
    <section aria-label="Graph editor" className="ml-[2px] flex min-h-[330px] flex-1 flex-col border-y border-l border-[#8a8a8a]">
      <MenuRow items={GRAPH_MENUS} label="Graph editor menu" className="h-[20px] border-b border-[#2b2b2b] pl-[7px]" />
      <div className="flex h-[30px] items-center overflow-hidden border-b-2 border-[#5c5c5c] pl-[2px]">
        {KEY_TOOLS.map(([label, art]) => (
          <IconButton key={label} label={label} className="mr-[2px] h-[25px] w-[25px] border border-[#222] bg-[#4a4a4a] ring-1 ring-[#606060] ring-inset">
            <Svg s={24} px={22}>{art}</Svg>
          </IconButton>
        ))}
        <Bar />
        <label htmlFor="stat-frame" className="w-[33px] shrink-0">Stats</label>
        <input id="stat-frame" className={`${field} h-[19px] w-[64px] shrink-0`} />
        <input aria-label="Key value" className={`${field} ml-[5px] h-[19px] w-[68px] shrink-0`} />
        {GRAPH_GROUPS.map((group, i) => (
          <div key={i} className="flex shrink-0 items-center">
            <Bar />
            {group.map(([label, art, active]) => (
              <IconButton key={label} label={label} active={active} className="h-[26px] w-[27px]">
                <Svg>{art}</Svg>
              </IconButton>
            ))}
          </div>
        ))}
        <Bar />
        <div className="-mr-[14px] ml-auto flex shrink-0">
          {GRAPH_RIGHT.map(([label, art]) => (
            <IconButton key={label} label={label} className="h-[26px] w-[26px]">
              <Svg>{art}</Svg>
            </IconButton>
          ))}
        </div>
      </div>
      <div className="flex flex-1">
        <Outliner />
        <div className="flex w-[6px] shrink-0 items-center justify-center">
          <svg width="2" height="88" aria-hidden="true"><rect width="100%" height="100%" fill="url(#row)" /></svg>
        </div>
        <Curves />
      </div>
    </section>
  );
}

const tick = (frame) => 0.51 + (frame - 1) * 0.99;
const EVEN = Array.from({ length: 50 }, (_, i) => (i + 1) * 2);

function TimeSlider() {
  return (
    <div className="flex h-[37px] items-center border-b border-[#2e2e2e] pl-[7px]">
      <Grip className="h-[29px] w-[5px]" />
      <svg className="ml-px h-[29px] min-w-0 flex-1 overflow-visible border-t border-[#222] bg-[#707070]" aria-label="Time slider">
        <rect x={`${tick(20)}%`} width="17" height="28" fill="#5a5a5a" />
        {EVEN.map((f) => (
          <g key={f}>
            <rect x={`${tick(f)}%`} y="13" width="2" height="15" fill="#000" />
            <text x={`${tick(f) + 0.22}%`} y="9" fontSize="11" fill="#0a0a0a">{f}</text>
          </g>
        ))}
        {[1, 10, 20, 29].map((f) => (
          <rect key={f} x={`${tick(f)}%`} width="1" height="28" fill={f === 20 ? "#b00" : "#f00"} shapeRendering="crispEdges" />
        ))}
        <text x={`${tick(20) + 0.22}%`} y="23" fontSize="11" fill="#fff">20</text>
      </svg>
      <input aria-label="Current time" defaultValue="20.00" className={`${field} ml-[3px] h-[20px] w-[46px] shrink-0 pl-1`} />
    </div>
  );
}

function RangeSlider() {
  const box = `${field} h-[20px] w-[69px] shrink-0 pl-1`;
  return (
    <div className="flex h-[30px] items-center border-b border-[#2e2e2e] pl-[7px]">
      <Grip className="h-[20px] w-[5px]" />
      <input aria-label="Animation start" defaultValue="1.00" className={`${box} ml-px`} />
      <input aria-label="Playback start" defaultValue="1.00" className={`${box} ml-[4px]`} />
      <div className="ml-[2px] flex h-[22px] min-w-0 flex-1 border-r border-b border-[#8a8a8a] bg-[#262626] px-[8px] pt-[3px]">
        <div className="flex flex-1 items-center justify-between border-b border-[#8a8a8a] bg-[#656565] px-[5px] text-[#d4d4d4]">
          <span className="flex items-center gap-[5px]"><span className="h-[12px] w-[10px] border-r border-b border-[#333]" />1</span>
          <span className="flex items-center gap-[5px]">100<span className="h-[12px] w-[10px] border-r border-b border-[#333]" /></span>
        </div>
      </div>
      <input aria-label="Playback end" defaultValue="100.00" className={`${box} ml-[3px]`} />
      <input aria-label="Animation end" defaultValue="100.00" className={`${box} ml-[3px]`} />
      <button aria-label="Character set menu" className="flex w-[21px] shrink-0 justify-center"><Chevron /></button>
      <button className="h-[20px] shrink-0 rounded-l-sm border border-r-0 border-[#606060] bg-[#494949] pl-[3px] text-left">No</button>
    </div>
  );
}

export default function App() {
  return (
    <div className="flex min-h-screen flex-col overflow-x-hidden bg-[#444] font-[Roboto,'DejaVu_Sans',sans-serif] text-[11px] leading-[14px] text-[#cacaca]">
      <Defs />
      <MenuRow items={MENUS} label="Main menu" className="h-[20px] border-b border-[#2e2e2e] pt-px pl-[8px] shadow-[0_1px_0_#555]" />
      <StatusLine />
      <Shelf />
      <div className="flex flex-1">
        <ToolBox />
        <main className="flex min-w-0 flex-1 flex-col">
          <Viewport />
          <GraphEditor />
        </main>
      </div>
      <TimeSlider />
      <RangeSlider />
      <div className="flex h-[31px] items-center border-b border-[#2e2e2e] pl-[7px]">
        <Grip className="h-[22px] w-[5px]" />
        <label htmlFor="mel" className="w-[47px] shrink-0 pl-[12px]">MEL</label>
        <input id="mel" className={`${field} h-[24px] flex-[573]`} />
        <output className="ml-[7px] flex h-[24px] min-w-0 flex-[427] items-center border-y border-[#222] bg-black pl-[5px] text-[#d4d4d4]">
          timeSliderPasteKey false;
        </output>
      </div>
      <footer className="flex h-[22px] items-end pl-[7px]">
        <Grip className="h-[20px] w-[5px]" />
        <p className="ml-px h-[20px] flex-1 border-t border-l border-[#222] pt-[4px] pl-[8px]">Step forward one key</p>
      </footer>
    </div>
  );
}
